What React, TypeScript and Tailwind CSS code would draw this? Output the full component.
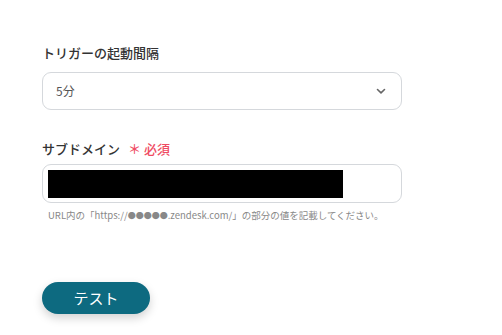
import React from "react";

export default function App() {
  return (
    <div
      className="w-[502px] h-[335px] bg-white overflow-hidden"
      style={{ fontFamily: '"Noto Sans CJK JP", "Noto Sans", sans-serif' }}
    >
      <div className="pl-[42px] pt-[44px] w-[402px]">
        <div className="text-[13px] font-medium text-[#333] leading-[18px]">
          トリガーの起動間隔
        </div>
        <div className="mt-[10px] h-[38px] rounded-[9px] border border-[#d5d8dc] flex items-center justify-between pl-[13px] pr-[15px]">
          <span className="text-[12px] text-[#555]">5分</span>
          <svg width="10" height="7" viewBox="0 0 10 7" fill="none">
            <path d="M1.5 1.5L5 4.8L8.5 1.5" stroke="#666" strokeWidth="1.6" strokeLinecap="round" strokeLinejoin="round" />
          </svg>
        </div>
        <div className="mt-[30px] flex items-center text-[13px] font-medium leading-[18px]">
          <span className="text-[#333]">サブドメイン</span>
          <span className="ml-[8px] text-[#ef4c63]">＊ 必須</span>
        </div>
        <div className="mt-[6px] h-[39px] rounded-[9px] border border-[#d5d8dc] flex items-center pl-[5px]">
          <div className="w-[295px] h-[28px] bg-black" />
        </div>
        <div className="mt-[5px] pl-[6px] text-[9.5px] text-[#888] leading-[14px]">
          URL内の「https://<span className="text-[8px]">●●●●●</span>.zendesk.com/」の部分の値を記載してください。
        </div>
        <button className="mt-[59px] w-[108px] h-[32px] rounded-full bg-[#0d6a80] text-white text-[15px] shadow-[0_4px_10px_rgba(0,0,0,0.18)]">
          テスト
        </button>
      </div>
    </div>
  );
}
